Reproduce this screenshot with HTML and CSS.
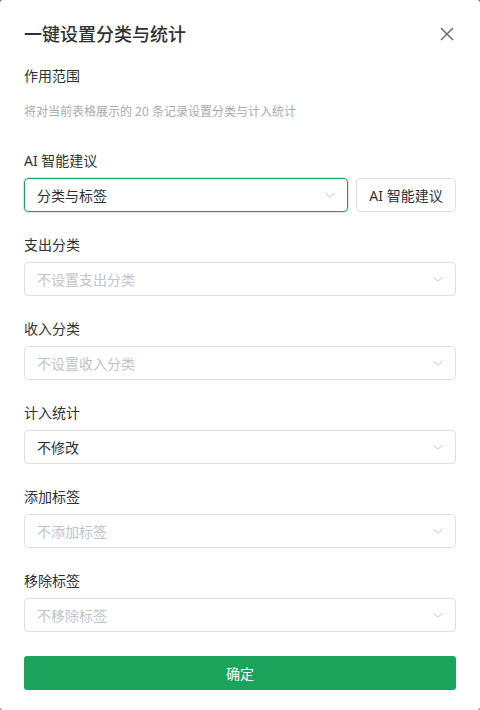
FILE: index.html
```html
<!DOCTYPE html>
<html lang="zh-CN">
<head>
<meta charset="utf-8">
<title>一键设置分类与统计</title>
<link rel="stylesheet" href="styles.css">
</head>
<body>
<div class="dialog">
  <div class="header">
    <h1 class="title">一键设置分类与统计</h1>
    <button class="close" aria-label="关闭">
      <svg width="14" height="14" viewBox="0 0 14 14"><path d="M1 1L13 13M13 1L1 13" stroke="#606266" stroke-width="1.4" fill="none"/></svg>
    </button>
  </div>
  <div class="scope">
    <div class="scope-label">作用范围</div>
    <div class="scope-desc">将对当前表格展示的 20 条记录设置分类与计入统计</div>
  </div>
  <div class="field">
    <div class="label">AI 智能建议</div>
    <div class="row">
      <div class="select focus"><span class="value">分类与标签</span><svg class="arrow" width="12" height="12" viewBox="0 0 12 12"><path d="M1.5 4L6 8.2L10.5 4" stroke="#c0c4cc" stroke-width="1" fill="none"/></svg></div>
      <button class="btn">AI 智能建议</button>
    </div>
  </div>
  <div class="field">
    <div class="label">支出分类</div>
    <div class="select"><span class="placeholder">不设置支出分类</span><svg class="arrow" width="12" height="12" viewBox="0 0 12 12"><path d="M1.5 4L6 8.2L10.5 4" stroke="#c0c4cc" stroke-width="1" fill="none"/></svg></div>
  </div>
  <div class="field">
    <div class="label">收入分类</div>
    <div class="select"><span class="placeholder">不设置收入分类</span><svg class="arrow" width="12" height="12" viewBox="0 0 12 12"><path d="M1.5 4L6 8.2L10.5 4" stroke="#c0c4cc" stroke-width="1" fill="none"/></svg></div>
  </div>
  <div class="field">
    <div class="label">计入统计</div>
    <div class="select"><span class="value">不修改</span><svg class="arrow" width="12" height="12" viewBox="0 0 12 12"><path d="M1.5 4L6 8.2L10.5 4" stroke="#c0c4cc" stroke-width="1" fill="none"/></svg></div>
  </div>
  <div class="field">
    <div class="label">添加标签</div>
    <div class="select"><span class="placeholder">不添加标签</span><svg class="arrow" width="12" height="12" viewBox="0 0 12 12"><path d="M1.5 4L6 8.2L10.5 4" stroke="#c0c4cc" stroke-width="1" fill="none"/></svg></div>
  </div>
  <div class="field">
    <div class="label">移除标签</div>
    <div class="select"><span class="placeholder">不移除标签</span><svg class="arrow" width="12" height="12" viewBox="0 0 12 12"><path d="M1.5 4L6 8.2L10.5 4" stroke="#c0c4cc" stroke-width="1" fill="none"/></svg></div>
  </div>
  <button class="primary">确定</button>
</div>
</body>
</html>
```

FILE: styles.css
```css
html, body {
  margin: 0;
  padding: 0;
  background: #6b6b6b;
}
body {
  font-family: "Noto Sans", "Noto Sans CJK SC", sans-serif;
  color: #303133;
}
.dialog {
  box-sizing: border-box;
  width: 480px;
  height: 710px;
  background: #fff;
  border-radius: 3px;
  padding: 18px 24px 0 24px;
}
.header {
  display: flex;
  align-items: center;
  justify-content: space-between;
  height: 32px;
}
.title {
  margin: 0;
  font-size: 18px;
  font-weight: 500;
  line-height: 32px;
  color: #303133;
}
.close {
  border: none;
  background: none;
  padding: 0;
  margin-right: 2px;
  width: 14px;
  height: 14px;
  display: flex;
}
.scope {
  margin-top: 15px;
}
.scope-label {
  font-size: 14px;
  line-height: 22px;
}
.scope-desc {
  margin-top: 15px;
  font-size: 12px;
  line-height: 20px;
  color: #a8abb2;
}
.field {
  margin-top: 28px;
}
.field + .field {
  margin-top: 22px;
}
.label {
  font-size: 14px;
  line-height: 22px;
  margin-bottom: 6px;
}
.row {
  display: flex;
  gap: 8px;
}
.select {
  box-sizing: border-box;
  flex: 1;
  height: 34px;
  border: 1px solid #dcdfe6;
  border-radius: 4px;
  padding: 0 11px 0 12px;
  display: flex;
  align-items: center;
  justify-content: space-between;
  font-size: 14px;
}
.select.focus {
  border-color: #1ba35c;
  box-shadow: 0 0 0 1px rgba(27, 163, 92, 0.18);
}
.value {
  color: #303133;
}
.placeholder {
  color: #c0c4cc;
}
.arrow {
  flex: none;
}
.btn {
  box-sizing: border-box;
  width: 100px;
  height: 34px;
  border: 1px solid #dcdfe6;
  border-radius: 4px;
  background: #fff;
  font-family: inherit;
  font-size: 14px;
  color: #303133;
  padding: 0;
}
.primary {
  display: block;
  box-sizing: border-box;
  width: 100%;
  height: 34px;
  margin-top: 24px;
  border: none;
  border-radius: 3px;
  background: #1ba35c;
  color: #fff;
  font-family: inherit;
  font-size: 14px;
}
```
